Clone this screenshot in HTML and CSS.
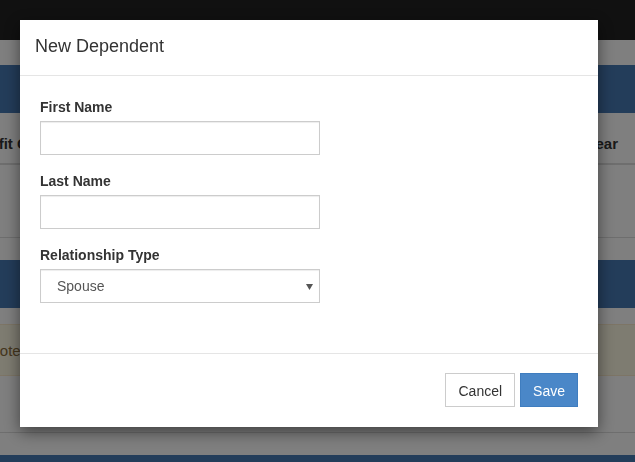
FILE: index.html
```html
<!DOCTYPE html>
<html lang="en">
<head>
<meta charset="utf-8">
<title>New Dependent</title>
<link rel="stylesheet" href="styles.css">
</head>
<body>
<div class="page">
  <div class="navbar"></div>
  <div class="band band-first"></div>
  <div class="table-head">
    <span class="th th-left">Benefit Coverage</span>
    <span class="th th-right">Plan Year</span>
  </div>
  <div class="table-row"></div>
  <div class="band band-second"></div>
  <div class="alert">Note: dependents must be verified.</div>
  <div class="table-row table-row-last"></div>
  <div class="band band-third"></div>
</div>

<div class="backdrop"></div>

<div class="modal" role="dialog" aria-labelledby="modal-title">
  <div class="modal-header">
    <h4 class="modal-title" id="modal-title">New Dependent</h4>
  </div>
  <form class="modal-body">
    <div class="form-group">
      <label for="first">First Name</label>
      <input class="form-control" id="first" type="text">
    </div>
    <div class="form-group">
      <label for="last">Last Name</label>
      <input class="form-control" id="last" type="text">
    </div>
    <div class="form-group">
      <label for="rel">Relationship Type</label>
      <div class="select-wrap">
        <select class="form-control select" id="rel">
          <option>Spouse</option>
          <option>Child</option>
        </select>
        <svg class="caret" width="7" height="6" viewBox="0 0 7 6" aria-hidden="true"><path d="M0 0H7L3.5 6Z" fill="#555"/></svg>
      </div>
    </div>
  </form>
  <div class="modal-footer">
    <button class="btn btn-default" type="button">Cancel</button>
    <button class="btn btn-primary" type="button">Save</button>
  </div>
</div>
</body>
</html>
```

FILE: styles.css
```css
* { box-sizing: border-box; }

html, body {
  margin: 0;
  padding: 0;
  height: 100%;
  overflow: hidden;
}

body {
  font-family: "Liberation Sans", Arial, sans-serif;
  font-size: 14px;
  line-height: 1.42857;
  color: #333;
  background: #fff;
}

.page {
  display: flex;
  flex-direction: column;
  height: 462px;
  overflow: hidden;
}

.navbar {
  flex: none;
  height: 40px;
  background: #222;
  margin-bottom: 25px;
}

.band {
  flex: none;
  height: 48px;
  background: #477ab5;
}

.table-head {
  flex: none;
  height: 52px;
  display: flex;
  align-items: center;
  justify-content: space-between;
  border-bottom: 2px solid #ddd;
  font-weight: bold;
  font-size: 15px;
  padding-top: 12px;
  white-space: nowrap;
}

.th-left { margin-left: -38px; }
.th-right { margin-right: 17px; }

.table-row {
  flex: none;
  height: 73px;
  border-bottom: 1px solid #ddd;
  margin-bottom: 22px;
}

.band-second { margin-bottom: 16px; }

.alert {
  flex: none;
  height: 52px;
  background: #fcf8e3;
  border-top: 1px solid #faebcc;
  border-bottom: 1px solid #faebcc;
  color: #8a6d3b;
  font-size: 15px;
  display: flex;
  align-items: center;
  padding-top: 2px;
  text-indent: -11px;
  white-space: nowrap;
}

.table-row-last {
  height: 57px;
}

.band-third {
  height: 7px;
}

.backdrop {
  position: fixed;
  inset: 0;
  background: rgba(0, 0, 0, 0.5);
}

.modal {
  position: fixed;
  left: 20px;
  top: 20px;
  width: 578px;
  background: #fff;
  box-shadow: 0 5px 15px rgba(0, 0, 0, 0.5);
}

.modal-header {
  padding: 14px 15px 15px;
  border-bottom: 1px solid #e5e5e5;
}

.modal-title {
  margin: 0;
  font-size: 18px;
  font-weight: normal;
  line-height: 1.42857;
  color: #333;
}

.modal-body {
  padding: 21px 20px 34px;
  margin: 0;
}

.form-group {
  margin-bottom: 16px;
  width: 280px;
}

label {
  display: block;
  font-weight: bold;
  line-height: 20px;
  margin-bottom: 4px;
  color: #333;
}

.form-control {
  display: block;
  width: 100%;
  height: 34px;
  padding: 6px 12px;
  font-family: inherit;
  font-size: 14px;
  color: #555;
  background: #fff;
  border: 1px solid #ccc;
  border-radius: 0;
  box-shadow: inset 0 1px 1px rgba(0, 0, 0, 0.075);
  outline: none;
}

.select-wrap {
  position: relative;
}

.select {
  appearance: none;
  -webkit-appearance: none;
  padding-left: 16px;
}

.caret {
  position: absolute;
  right: 7px;
  top: 15px;
  pointer-events: none;
}

.modal-footer {
  padding: 19px 20px 20px;
  border-top: 1px solid #e5e5e5;
  display: flex;
  justify-content: flex-end;
  gap: 5px;
}

.btn {
  height: 34px;
  padding: 7px 12px 5px;
  font-family: inherit;
  font-size: 14px;
  line-height: 20px;
  border: 1px solid transparent;
  border-radius: 0;
  cursor: pointer;
}

.btn-default {
  color: #333;
  background: #fff;
  border-color: #ccc;
}

.btn-primary {
  color: #fff;
  background: #4a87c8;
  border-color: #3f7dbf;
}
```
